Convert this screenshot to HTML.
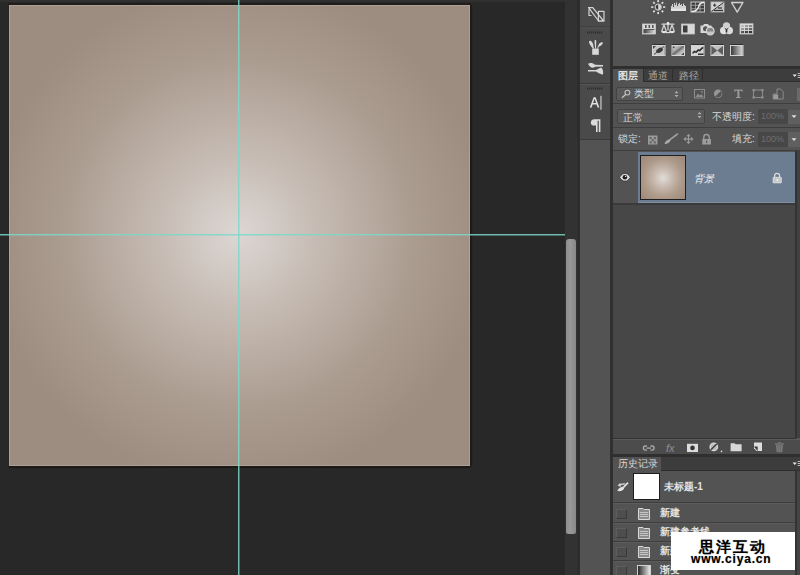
<!DOCTYPE html>
<html><head><meta charset="utf-8">
<style>
*{margin:0;padding:0;box-sizing:border-box}
html,body{width:800px;height:575px;overflow:hidden;background:#282828;font-family:"Liberation Sans",sans-serif;position:relative}
.a{position:absolute}
.t{color:#d8d8d8;font-size:10px;line-height:11px;white-space:nowrap;font-weight:500}
</style></head><body>
<!-- top strip -->
<div class="a" style="left:0;top:0;width:577px;height:2px;background:#303030"></div>
<div class="a" style="left:8px;top:3px;width:463px;height:2px;background:#201d1c"></div>

<!-- canvas -->
<div class="a" style="left:9px;top:5px;width:461px;height:461px;background:radial-gradient(circle at 229px 229px,#dcd7d4 0px,#c6bbb3 80px,#ab9c90 175px,#9d8d80 250px);box-shadow:0 2px 1px #1c1917,2px 0 1px #1e1b19"></div>
<div class="a" style="left:9px;top:5px;width:461px;height:461px;border:1px solid rgba(215,210,205,0.28)"></div>

<!-- guides -->
<div class="a" style="left:0;top:234px;width:565px;height:1px;background:rgba(125,215,200,0.85)"></div><div class="a" style="left:0;top:235px;width:565px;height:1px;background:rgba(125,215,200,0.4)"></div>
<div class="a" style="left:238px;top:0;width:1px;height:575px;background:rgba(125,215,200,0.85)"></div><div class="a" style="left:239px;top:0;width:1px;height:575px;background:rgba(125,215,200,0.4)"></div>

<!-- scrollbar -->
<div class="a" style="left:565px;top:0;width:12px;height:575px;background:#323232"></div>
<div class="a" style="left:566px;top:239px;width:10px;height:295px;border-radius:3px 3px 2px 2px;background:linear-gradient(90deg,#8e8e8e,#999 40%,#888)"></div>
<div class="a" style="left:577px;top:0;width:3px;height:575px;background:#2d2d2d"></div>

<!-- toolbar column -->
<div class="a" style="left:580px;top:0;width:30px;height:575px;background:#535353"></div>
<div class="a" style="left:580px;top:0;width:30px;height:139px;background:#4a4a4a"></div>
<div class="a" style="left:610px;top:0;width:3px;height:575px;background:#303030"></div>

<!-- right panels -->
<div class="a" style="left:613px;top:0;width:187px;height:575px;background:#535353"></div>


<!-- adjustments panel -->
<div class="a" style="left:613px;top:0;width:187px;height:66px;background:#535353"></div>
<div class="a" style="left:613px;top:66px;width:187px;height:3px;background:#2f2f2f"></div>
<!-- layers tab bar -->
<div class="a" style="left:613px;top:69px;width:187px;height:13px;background:#3d3d3d"></div>
<div class="a" style="left:613px;top:69px;width:30px;height:13px;background:#535353"></div>
<div class="a" style="left:643px;top:68px;width:1px;height:14px;background:#2d2d2d"></div>
<div class="a" style="left:672px;top:68px;width:1px;height:14px;background:#2d2d2d"></div>
<div class="a" style="left:702px;top:68px;width:1px;height:14px;background:#2d2d2d"></div>
<div class="a t" style="left:618px;top:70px;font-weight:bold;color:#e0e0e0">图层</div>
<div class="a t" style="left:648px;top:70px;color:#a8a8a8">通道</div>
<div class="a t" style="left:679px;top:70px;color:#a8a8a8">路径</div>

<!-- layers content -->
<div class="a" style="left:613px;top:82px;width:187px;height:357px;background:#535353"></div>
<div class="a" style="left:613px;top:103px;width:187px;height:1px;background:#3e3e3e"></div>
<div class="a" style="left:613px;top:127px;width:187px;height:1px;background:#3e3e3e"></div>
<div class="a" style="left:613px;top:150px;width:187px;height:1px;background:#3e3e3e"></div>
<!-- filter dropdown -->
<div class="a" style="left:616px;top:87px;width:67px;height:14px;background:#5a5a5a;border:1px solid #434343;border-radius:2px"></div>
<div class="a t" style="left:634px;top:88px">类型</div>
<!-- blend dropdown -->
<div class="a" style="left:617px;top:109px;width:88px;height:15px;background:#5a5a5a;border:1px solid #434343;border-radius:2px"></div>
<div class="a t" style="left:623px;top:112px">正常</div>
<div class="a t" style="left:712px;top:111px">不透明度:</div>
<div class="a" style="left:758px;top:109px;width:30px;height:15px;background:#474747"></div>
<div class="a t" style="left:761px;top:111px;color:#6f6f6f;font-size:9px">100%</div>
<div class="a" style="left:788px;top:110px;width:12px;height:14px;background:#5f5f5f"></div>
<!-- lock row -->
<div class="a t" style="left:618px;top:133px">锁定:</div>
<div class="a t" style="left:732px;top:133px">填充:</div>
<div class="a" style="left:758px;top:132px;width:30px;height:15px;background:#474747"></div>
<div class="a t" style="left:761px;top:134px;color:#6f6f6f;font-size:9px">100%</div>
<div class="a" style="left:788px;top:132px;width:12px;height:15px;background:#5f5f5f"></div>

<!-- layer list -->
<div class="a" style="left:613px;top:151px;width:183px;height:287px;background:#474747"></div>
<div class="a" style="left:613px;top:151px;width:183px;height:53px;background:#535353"></div>
<div class="a" style="left:638px;top:152px;width:157px;height:51px;background:#6c7d92"></div>
<div class="a" style="left:638px;top:202px;width:157px;height:1px;background:#7f8aa0"></div><div class="a" style="left:613px;top:203px;width:182px;height:2px;background:#3a3a3a"></div>
<div class="a" style="left:640px;top:155px;width:46px;height:45px;border:1px solid #1e1e1e;background:radial-gradient(circle at 22px 22px,#e2ddd8 0px,#c8bab0 9px,#ad9a8a 19px,#a18c7b 28px)"></div>
<div class="a" style="left:694px;top:173px;color:#f0f0f0;font-size:10px;line-height:11px;font-weight:500;font-style:italic;white-space:nowrap">背景</div>

<!-- layers bottom bar -->
<div class="a" style="left:613px;top:438px;width:183px;height:1px;background:#333"></div>
<div class="a" style="left:613px;top:439px;width:187px;height:15px;background:#4c4c4c"></div>
<div class="a" style="left:613px;top:454px;width:187px;height:3px;background:#2f2f2f"></div>
<!-- history tab bar -->
<div class="a" style="left:613px;top:457px;width:187px;height:14px;background:#3d3d3d"></div>
<div class="a" style="left:613px;top:457px;width:48px;height:14px;background:#535353"></div>
<div class="a t" style="left:618px;top:458px">历史记录</div>
<!-- history content -->
<div class="a" style="left:613px;top:471px;width:183px;height:104px;background:#535353"></div>
<div class="a" style="left:633px;top:473px;width:27px;height:27px;background:#fff;border:1px solid #1e1e1e"></div>
<div class="a t" style="left:664px;top:481px;font-weight:bold;color:#e2e2e2">未标题-1</div>
<div class="a" style="left:613px;top:502px;width:183px;height:1px;background:#3d3d3d"></div>
<div class="a" style="left:613px;top:522px;width:183px;height:1px;background:#3d3d3d"></div>
<div class="a" style="left:613px;top:541px;width:183px;height:1px;background:#3d3d3d"></div>
<div class="a" style="left:613px;top:560px;width:183px;height:1px;background:#3d3d3d"></div>
<div class="a t" style="left:660px;top:507px;font-weight:bold;color:#e2e2e2">新建</div>
<div class="a t" style="left:660px;top:526px;font-weight:bold;color:#e2e2e2">新建参考线</div>
<div class="a t" style="left:660px;top:545px;font-weight:bold;color:#e2e2e2">新建参考线</div>
<div class="a t" style="left:660px;top:564px;font-weight:bold;color:#e2e2e2">渐变</div>
<div class="a" style="left:616px;top:509px;width:11px;height:10px;border:1px solid;border-color:#5e5e5e #3a3a3a #3a3a3a #5e5e5e;background:#4e4e4e"></div>
<div class="a" style="left:616px;top:528px;width:11px;height:10px;border:1px solid;border-color:#5e5e5e #3a3a3a #3a3a3a #5e5e5e;background:#4e4e4e"></div>
<div class="a" style="left:616px;top:547px;width:11px;height:10px;border:1px solid;border-color:#5e5e5e #3a3a3a #3a3a3a #5e5e5e;background:#4e4e4e"></div>
<div class="a" style="left:616px;top:566px;width:11px;height:10px;border:1px solid;border-color:#5e5e5e #3a3a3a #3a3a3a #5e5e5e;background:#4e4e4e"></div>


<svg class="a" style="left:0;top:0" width="800" height="575" viewBox="0 0 800 575">
<defs>
<linearGradient id="gl" x1="0" y1="0" x2="0" y2="1"><stop offset="0" stop-color="#e8e8e8"/><stop offset="1" stop-color="#b8b8b8"/></linearGradient>
<linearGradient id="gh" x1="0" y1="0" x2="1" y2="0"><stop offset="0" stop-color="#3a3a3a"/><stop offset="1" stop-color="#d8d8d8"/></linearGradient>
<linearGradient id="gd" x1="0" y1="0" x2="1" y2="1"><stop offset="0" stop-color="#444"/><stop offset="1" stop-color="#d0d0d0"/></linearGradient>
</defs>
<!-- ===== adjustments row 1 ===== -->
<g stroke="#dedede" stroke-width="1.7"><line x1="663.10" y1="7.10" x2="665.20" y2="7.10"/><line x1="661.66" y1="10.56" x2="663.15" y2="12.05"/><line x1="658.20" y1="12.00" x2="658.20" y2="14.10"/><line x1="654.74" y1="10.56" x2="653.25" y2="12.05"/><line x1="653.30" y1="7.10" x2="651.20" y2="7.10"/><line x1="654.74" y1="3.64" x2="653.25" y2="2.15"/><line x1="658.20" y1="2.20" x2="658.20" y2="0.10"/><line x1="661.66" y1="3.64" x2="663.15" y2="2.15"/></g>
<circle cx="658.2" cy="7.1" r="3.2" fill="#d8d8d8" stroke="#b8b8b8" stroke-width="0.9"/>
<path d="M658.2 4.7 A2.4 2.4 0 0 0 658.2 9.5 Z" fill="#353535"/>
<!-- levels -->
<g fill="#cfcfcf"><rect x="671" y="6" width="1" height="5"/><rect x="672" y="4" width="1" height="7"/><rect x="673" y="7" width="1" height="4"/><rect x="674" y="3" width="1" height="8"/><rect x="675" y="5" width="1" height="6"/><rect x="676" y="2.5" width="1" height="8.5"/><rect x="677" y="6" width="1" height="5"/><rect x="678" y="4" width="1" height="7"/><rect x="679" y="3" width="1" height="8"/><rect x="680" y="5" width="1" height="6"/><rect x="681" y="4" width="1" height="7"/><rect x="682" y="6" width="1" height="5"/><rect x="683" y="3.5" width="1" height="7.5"/><rect x="684" y="5" width="1" height="6"/><rect x="685" y="6" width="1" height="5"/></g>
<rect x="671" y="8.5" width="15" height="2.5" fill="#e4e4e4"/>
<!-- curves -->
<rect x="691" y="2" width="13.5" height="10" fill="#3e3e3e" stroke="#c8c8c8" stroke-width="1"/>
<g stroke="#aaa" stroke-width="0.8"><line x1="695.5" y1="2" x2="695.5" y2="12"/><line x1="700" y1="2" x2="700" y2="12"/><line x1="691" y1="5.3" x2="704.5" y2="5.3"/><line x1="691" y1="8.7" x2="704.5" y2="8.7"/></g>
<path d="M691.5 11.5 C696 11.5 698 9 698.5 7 C699 4.5 700.5 2.5 704 2.5" fill="none" stroke="#eee" stroke-width="1.3"/>
<!-- exposure -->
<rect x="711" y="2" width="13" height="10" fill="#d4d4d4" stroke="#bbb" stroke-width="0.8"/>
<path d="M711.5 11.5 L723.5 2.5 L723.5 11.5 Z" fill="#c0c0c0"/>
<line x1="711.5" y1="11.5" x2="723.5" y2="2.5" stroke="#333" stroke-width="1"/>
<path d="M713 5.2 h3.4 M714.7 3.5 v3.4" stroke="#333" stroke-width="1"/>
<line x1="718" y1="8" x2="722" y2="8" stroke="#333" stroke-width="1.2"/>
<line x1="714" y1="10.5" x2="723" y2="10.5" stroke="#333" stroke-width="1.2"/>
<!-- vibrance triangle -->
<path d="M731.5 2.5 L743 2.5 L737.2 12.2 Z" fill="#5a5a5a" stroke="#d0d0d0" stroke-width="1.3" stroke-linejoin="round"/>
<path d="M734 4 L740.5 4 L737.2 9.5 Z" fill="#4a4a4a"/>

<!-- ===== adjustments row 2 ===== -->
<!-- HSL -->
<rect x="642.5" y="24" width="13" height="10" fill="#d8d8d8" stroke="#c8c8c8" stroke-width="0.8"/>
<rect x="643.5" y="30" width="11" height="3.2" fill="url(#gh)"/>
<g fill="#555"><rect x="645" y="25" width="1.6" height="3"/><rect x="648.5" y="25" width="1.6" height="3"/><rect x="652" y="25" width="1.6" height="3"/></g>
<rect x="643.5" y="29" width="11" height="1" fill="#555"/>
<!-- balance -->
<g fill="none" stroke="#d8d8d8" stroke-width="1.2" stroke-linecap="round">
<line x1="662" y1="24.2" x2="674" y2="24.2"/><line x1="668" y1="23" x2="668" y2="30"/>
<path d="M664 25 L661.8 31 M664 25 L666.2 31 M672 25 L669.8 31 M672 25 L674.2 31"/>
</g>
<circle cx="668" cy="23.3" r="1.3" fill="#eee"/>
<path d="M661.3 31 h5.4 a2.7 2.2 0 0 1 -5.4 0 Z M669.3 31 h5.4 a2.7 2.2 0 0 1 -5.4 0 Z" fill="#e0e0e0"/>
<rect x="666" y="32" width="4" height="1.2" fill="#ddd"/>
<!-- B&W -->
<rect x="681.5" y="24" width="13" height="10" fill="#d8d8d8" stroke="#c0c0c0" stroke-width="0.8"/>
<rect x="683" y="25.5" width="4.5" height="7" fill="#3c3c3c"/>
<!-- photo filter -->
<path d="M700.5 25.5 h2.5 l1 -1.5 h4 l1 1.5 h2.5 v7.5 h-11 Z" fill="#d8d8d8"/>
<circle cx="705.5" cy="28.8" r="2.5" fill="#555"/>
<circle cx="710.2" cy="31" r="3.9" fill="#888" stroke="#e0e0e0" stroke-width="1.1"/>
<path d="M707 31.5 a3.2 3.2 0 0 0 6.4 0 Z" fill="#c8c8c8"/>
<!-- channel mixer -->
<circle cx="726.5" cy="25.8" r="3.6" fill="#d0d0d0"/>
<circle cx="723.8" cy="30.5" r="3.8" fill="#e0e0e0"/>
<circle cx="729.2" cy="30.5" r="3.8" fill="#dadada"/>
<path d="M724 27.2 L726.5 29 L729 27.2 L727.3 29.8 L727.3 32.5 L725.7 32.5 L725.7 29.8 Z" fill="#333"/>
<!-- color lookup -->
<rect x="740" y="23.8" width="13" height="10.2" fill="#e0e0e0" stroke="#c8c8c8" stroke-width="0.8"/>
<g>
<rect x="741" y="25" width="3.2" height="2.2" fill="#bbb"/><rect x="745" y="25" width="3.2" height="2.2" fill="#999"/><rect x="749" y="25" width="3.2" height="2.2" fill="#888"/>
<rect x="741" y="28" width="3.2" height="2.2" fill="#999"/><rect x="745" y="28" width="3.2" height="2.2" fill="#777"/><rect x="749" y="28" width="3.2" height="2.2" fill="#666"/>
<rect x="741" y="31" width="3.2" height="2.2" fill="#555"/><rect x="745" y="31" width="3.2" height="2.2" fill="#444"/><rect x="749" y="31" width="3.2" height="2.2" fill="#333"/>
</g>

<!-- ===== adjustments row 3 ===== -->
<g fill="#2e2e2e"><rect x="652.5" y="44" width="12.5" height="1"/><rect x="672" y="44" width="12.5" height="1"/><rect x="691.5" y="44" width="12.5" height="1"/><rect x="711" y="44" width="12.5" height="1"/><rect x="730.5" y="44" width="12.5" height="1"/></g>
<g fill="none" stroke="#d4d4d4" stroke-width="1">
<rect x="652.5" y="45.5" width="12.5" height="10"/>
<rect x="672" y="45.5" width="12.5" height="10"/>
<rect x="691.5" y="45.5" width="12.5" height="10"/>
<rect x="711" y="45.5" width="12.5" height="10"/>
<rect x="730.5" y="45.5" width="12.5" height="10"/>
</g>
<!-- invert -->
<rect x="653" y="46" width="11.5" height="9" fill="#c4c4c4"/>
<path d="M653 46 h3 l-3 3 Z" fill="#444"/>
<ellipse cx="659.5" cy="50.3" rx="3.6" ry="2.2" transform="rotate(-30 659.5 50.3)" fill="#3a3a3a"/>
<line x1="654" y1="54.5" x2="664" y2="46.5" stroke="#3a3a3a" stroke-width="0.9"/>
<!-- posterize -->
<defs><linearGradient id="gp" x1="0" y1="0" x2="1" y2="1"><stop offset="0" stop-color="#d0d0d0"/><stop offset="0.35" stop-color="#a8a8a8"/><stop offset="0.5" stop-color="#6a6a6a"/><stop offset="0.65" stop-color="#b0b0b0"/><stop offset="1" stop-color="#d8d8d8"/></linearGradient></defs>
<rect x="672.5" y="46" width="11.5" height="9" fill="url(#gp)"/>
<rect x="673" y="46.5" width="1.5" height="1.5" fill="#444"/>
<path d="M684 52.5 L681 55 L684 55 Z" fill="#444"/>
<!-- threshold -->
<rect x="692" y="46" width="11.5" height="9" fill="#d6d6d6"/>
<path d="M692.5 52 L694.5 50.5 L696 51.2 L698 49 L699.5 49.6 L701.5 47.5 L703.2 46.8 L703.2 48.6 L701.8 49.5 L700 51.5 L698.5 51 L696.5 53 L695 52.5 L692.5 54 Z" fill="#2e2e2e"/>
<rect x="698" y="53.5" width="5.5" height="1.5" fill="#333"/>
<!-- selective color -->
<rect x="711.5" y="46" width="11.5" height="9" fill="#c0c0c0"/>
<path d="M711.5 46 L717.2 50.5 L711.5 55 Z M723 46 L717.2 50.5 L723 55 Z" fill="#5e5e5e"/>
<!-- gradient map -->
<rect x="731" y="46" width="11.5" height="9" fill="url(#gh)"/>
</svg>


<svg class="a" style="left:0;top:0" width="800" height="575" viewBox="0 0 800 575">
<!-- ===== toolbar ===== -->
<g fill="none" stroke="#d4d4d4" stroke-width="1.2" stroke-linejoin="round">
 <path d="M588.6 7.6 L592.8 7.6 L603.6 21 L598.6 21 Z"/>
 <path d="M589 9 L589 15.5 L591.5 15.5"/>
 <rect x="598.4" y="11.4" width="5.6" height="9.6"/>
</g>
<rect x="580" y="26.5" width="30" height="1" fill="#3a3a3a"/>
<rect x="580" y="27.5" width="30" height="1" fill="#555"/>
<g fill="#2e2e2e"><rect x="587" y="31.5" width="1.2" height="2"/><rect x="589" y="31.5" width="1.2" height="2"/><rect x="591" y="31.5" width="1.2" height="2"/><rect x="593" y="31.5" width="1.2" height="2"/><rect x="595" y="31.5" width="1.2" height="2"/><rect x="597" y="31.5" width="1.2" height="2"/><rect x="599" y="31.5" width="1.2" height="2"/><rect x="601" y="31.5" width="1.2" height="2"/></g>
<!-- brushes -->
<g fill="#d8d8d8">
 <path d="M592.2 48.5 h6.6 v6.3 h-6.6 Z"/>
 <path d="M589.2 41.2 C590.5 40 592.4 41.6 593 44 L594 48.5 L593 48.5 C591.5 46.5 588.4 43.5 589.2 41.2 Z"/>
 <path d="M595 40 C596.3 39.6 596.5 41 596.2 43 L596 48.5 L595.2 48.5 L594.6 43 C594.5 41.5 594.5 40.2 595 40 Z"/>
 <path d="M597 48.5 L598.5 45 C599.5 43 601 42 603 42.5 C602.5 44.5 601 46 599 46.5 L597.8 48.5 Z"/>
</g>
<!-- tool presets -->
<g fill="#d8d8d8">
 <path d="M588 63.8 C590 62.5 593 62.8 595 64.8 L603 65 L603 66.5 L595 66.8 C593 68.5 590 68 588 63.8 Z"/>
 <path d="M588 70 L596 70 L601 67.5 C603 68.5 603.5 72 603 74.5 C601 74.5 598 73 596 71.6 L588 71.6 Z"/>
</g>
<rect x="580" y="83" width="30" height="1" fill="#3a3a3a"/>
<rect x="580" y="84" width="30" height="1" fill="#555"/>
<g fill="#2e2e2e"><rect x="587" y="87.5" width="1.2" height="2"/><rect x="589" y="87.5" width="1.2" height="2"/><rect x="591" y="87.5" width="1.2" height="2"/><rect x="593" y="87.5" width="1.2" height="2"/><rect x="595" y="87.5" width="1.2" height="2"/><rect x="597" y="87.5" width="1.2" height="2"/><rect x="599" y="87.5" width="1.2" height="2"/><rect x="601" y="87.5" width="1.2" height="2"/></g>
<!-- type -->
<path d="M589.8 107.6 L593.6 97.3 L595.6 97.3 L599.4 107.6 L597.6 107.6 L596.6 104.6 L592.6 104.6 L591.6 107.6 Z M593.1 103.1 L596.1 103.1 L594.6 98.8 Z" fill="#e0e0e0"/>
<rect x="600.4" y="95.8" width="1.1" height="14" fill="#d8d8d8"/>
<!-- paragraph -->
<path d="M594.5 119.2 L600.4 119.2 L600.4 132 L598.8 132 L598.8 120.8 L597.6 120.8 L597.6 132 L596 132 L596 125.6 L594.5 125.6 C591.8 125.6 590.8 124 590.8 122.4 C590.8 120.6 592 119.2 594.5 119.2 Z" fill="#dcdcdc"/>
<rect x="580" y="139" width="30" height="1" fill="#3a3a3a"/>

<!-- ===== layers filter row ===== -->
<circle cx="627.4" cy="92.6" r="2.4" fill="none" stroke="#c4c4c4" stroke-width="1.1"/>
<line x1="625.6" y1="94.5" x2="622" y2="97.8" stroke="#c4c4c4" stroke-width="1.3"/>
<path d="M674.5 93.3 L676.5 91 L678.5 93.3 Z M674.5 95 L678.5 95 L676.5 97.3 Z" fill="#b0b0b0"/>
<g fill="none" stroke="#8c8c8c" stroke-width="1">
 <rect x="694.5" y="89.5" width="10" height="8.5"/>
 <rect x="753.5" y="90" width="9" height="7.5"/>
</g>
<path d="M695.5 97 L698 93.5 L700 95.5 L701.5 94 L703.5 97 Z" fill="#8c8c8c"/>
<circle cx="702" cy="91.8" r="0.9" fill="#8c8c8c"/>
<circle cx="718.1" cy="93.8" r="4.2" fill="#959595"/>
<path d="M715.3 96.6 L720.9 91 A4 4 0 0 1 715.3 96.6 Z" fill="#555"/>
<path d="M734.2 89.6 h8.4 v2.2 h-1 v-1 h-2.2 v6.2 h1.3 v1 h-4.6 v-1 h1.3 v-6.2 h-2.2 v1 h-1 Z" fill="#9a9a9a"/>
<g fill="#8c8c8c"><rect x="752.5" y="89" width="2.4" height="2.4"/><rect x="761.2" y="89" width="2.4" height="2.4"/><rect x="752.5" y="96.2" width="2.4" height="2.4"/><rect x="761.2" y="96.2" width="2.4" height="2.4"/></g>
<path d="M777 89 h3.5 l2.7 2.7 v7.3 h-10 v-5 h3.8 Z" fill="none" stroke="#8c8c8c" stroke-width="1"/>
<rect x="773.4" y="94.5" width="4.8" height="4.5" fill="#9a9a9a"/>
<rect x="797" y="88" width="3" height="13" fill="#6a6a6a"/>
<!-- blend row -->
<path d="M697.5 114.3 L699.5 112 L701.5 114.3 Z M697.5 116 L701.5 116 L699.5 118.3 Z" fill="#b0b0b0"/>
<path d="M791.5 115.3 L796.5 115.3 L794 118 Z" fill="#e0e0e0"/>
<path d="M791.5 138.3 L796.5 138.3 L794 141 Z" fill="#e0e0e0"/>
<!-- lock row icons -->
<rect x="648" y="135.5" width="9.5" height="9" fill="#9a9a9a"/>
<g fill="#6a6a6a"><rect x="649.5" y="137" width="2.2" height="2.2"/><rect x="653.8" y="137" width="2.2" height="2.2"/><rect x="651.7" y="139.2" width="2.2" height="2.2"/><rect x="649.5" y="141.3" width="2.2" height="2.2"/><rect x="653.8" y="141.3" width="2.2" height="2.2"/></g>
<line x1="669.5" y1="140" x2="677.5" y2="134" stroke="#9c9c9c" stroke-width="1.6" stroke-linecap="round"/>
<path d="M664.5 144 C665 141.5 667 139.5 669.5 139.5 L670.6 140.8 C669.5 143 667 144.3 664.5 144 Z" fill="#a8a8a8"/>
<g fill="#9c9c9c">
<path d="M688.5 134 L690.8 136.3 L686.2 136.3 Z M688.5 144 L690.8 141.7 L686.2 141.7 Z M683.5 139 L685.8 136.7 L685.8 141.3 Z M693.5 139 L691.2 136.7 L691.2 141.3 Z"/>
<rect x="684.5" y="138.4" width="8" height="1.2"/><rect x="687.9" y="135" width="1.2" height="8"/>
</g>
<path d="M703.8 139 v-1.8 a2.7 2.7 0 0 1 5.4 0 v1.8" fill="none" stroke="#9c9c9c" stroke-width="1.4"/>
<rect x="702.3" y="139" width="8.6" height="5.5" fill="#9c9c9c"/>
<rect x="706.1" y="140.5" width="1.1" height="2.4" fill="#555"/>

<!-- ===== layer row ===== -->
<path d="M619.6 177.3 C621.5 174.3 623.3 173.5 625 173.5 C626.7 173.5 628.5 174.3 630.3 177.3 C628.5 180.3 626.7 181.1 625 181.1 C623.3 181.1 621.5 180.3 619.6 177.3 Z" fill="#dedede" stroke="#222" stroke-width="0.6"/>
<circle cx="624.9" cy="177.3" r="2.3" fill="#1e1e1e"/>
<circle cx="625.6" cy="176.4" r="0.7" fill="#ddd"/>
<path d="M774.6 177.3 v-1.5 a2.5 2.5 0 0 1 5 0 v1.5" fill="none" stroke="#dcdcdc" stroke-width="1.2"/>
<rect x="773" y="177.3" width="8.4" height="5.6" rx="0.6" fill="#c8c8c8" stroke="#eee" stroke-width="0.6"/>
<rect x="776.7" y="179" width="1" height="2" fill="#fff"/>

<!-- ===== layers bottom bar ===== -->
<g fill="none" stroke="#a8a8a8" stroke-width="1.3">
 <path d="M647 446 h-1.5 a2.1 2.1 0 0 0 0 4.2 h1.5"/>
 <path d="M650.5 446 h1.5 a2.1 2.1 0 0 1 0 4.2 h-1.5"/>
 <line x1="646.5" y1="448.1" x2="651" y2="448.1"/>
</g>
<text x="666" y="452.3" font-family="Liberation Sans" font-style="italic" font-size="11" fill="#8e8e8e">fx</text>
<rect x="687" y="443.8" width="11" height="8.2" fill="#dcdcdc"/>
<circle cx="692.5" cy="447.9" r="2.3" fill="#333"/>
<circle cx="713.8" cy="446.9" r="4.4" fill="#d8d8d8"/>
<circle cx="713.8" cy="446.9" r="3.2" fill="#bdbdbd"/>
<path d="M710.9 449.8 L716.7 444" stroke="#3a3a3a" stroke-width="1.5"/>
<path d="M713.8 442.7 A4.2 4.2 0 0 1 713.8 451.1 Z" fill="#d8d8d8" opacity="0"/>
<circle cx="721.5" cy="451.4" r="0.8" fill="#ddd"/>
<path d="M730.6 443.2 h4 l1 1 h6 v7 h-11 Z" fill="#d8d8d8"/>
<path d="M754 442.5 h8 v8.6 h-5.5 l-2.5 -2.8 Z" fill="#dcdcdc"/>
<path d="M754 446.5 h3.6 v4.6 Z" fill="#333"/>
<g fill="#7a7a7a"><rect x="775" y="443.3" width="9" height="1.4"/><rect x="777.8" y="442.3" width="3.4" height="1"/><path d="M776 445.3 h7 l-0.6 7 h-5.8 Z"/></g>
<g stroke="#5a5a5a" stroke-width="0.6"><line x1="778.3" y1="446" x2="778.3" y2="451.5"/><line x1="780.7" y1="446" x2="780.7" y2="451.5"/></g>
<path d="M792.6 74.6 L796.8 74.6 L794.7 77 Z" fill="#e8e8e8"/><g fill="#b8b8b8"><rect x="797.6" y="73" width="2.4" height="1"/><rect x="797.6" y="75" width="2.4" height="1"/><rect x="797.6" y="77" width="2.4" height="1"/></g>
<path d="M792.6 462.6 L796.8 462.6 L794.7 465 Z" fill="#e8e8e8"/><g fill="#b8b8b8"><rect x="797.6" y="461" width="2.4" height="1"/><rect x="797.6" y="463" width="2.4" height="1"/><rect x="797.6" y="465" width="2.4" height="1"/></g>

<!-- ===== history ===== -->
<g>
<line x1="623.2" y1="487.6" x2="628" y2="482.6" stroke="#e0e0e0" stroke-width="1.7"/>
<path d="M617.3 491 C618.3 488.6 620.3 487 622.8 486.8 L624.2 488.2 C623.2 490.4 620.6 491.6 617.3 491 Z" fill="#e4e4e4"/>
<path d="M617.6 485.6 L620.3 482.8 L620.5 484 C622 483.2 623.8 483 625.3 483.5 L624.2 484.9 C622.9 484.6 621.8 484.9 620.7 485.6 L620.8 486.9 Z" fill="#d0d0d0"/>
</g>
<path d="M638.5 508.5 h4.5 l1 1 h5.5 v10 h-11 Z" fill="#8c8c8c" stroke="#d8d8d8" stroke-width="1"/><g fill="#c4c4c4"><rect x="640" y="512" width="8" height="1"/><rect x="640" y="514" width="8" height="1"/><rect x="640" y="516" width="8" height="1"/></g>
<path d="M638.5 527.5 h4.5 l1 1 h5.5 v10 h-11 Z" fill="#8c8c8c" stroke="#d8d8d8" stroke-width="1"/><g fill="#c4c4c4"><rect x="640" y="531" width="8" height="1"/><rect x="640" y="533" width="8" height="1"/><rect x="640" y="535" width="8" height="1"/></g>
<path d="M638.5 546.5 h4.5 l1 1 h5.5 v10 h-11 Z" fill="#8c8c8c" stroke="#d8d8d8" stroke-width="1"/><g fill="#c4c4c4"><rect x="640" y="550" width="8" height="1"/><rect x="640" y="552" width="8" height="1"/><rect x="640" y="554" width="8" height="1"/></g>
<defs><linearGradient id="gh2" x1="0" y1="0" x2="1" y2="0"><stop offset="0" stop-color="#222"/><stop offset="1" stop-color="#f0f0f0"/></linearGradient></defs>
<rect x="637.5" y="565.5" width="13" height="10" fill="url(#gh2)" stroke="#d0d0d0" stroke-width="1"/>
</svg>

<div class="a" style="left:613px;top:503px;width:182px;height:1px;background:#5c5c5c"></div>
<div class="a" style="left:613px;top:523px;width:182px;height:1px;background:#5c5c5c"></div>
<div class="a" style="left:613px;top:542px;width:182px;height:1px;background:#5c5c5c"></div>
<div class="a" style="left:613px;top:561px;width:182px;height:1px;background:#5c5c5c"></div>
<div class="a" style="left:643px;top:81px;width:157px;height:1px;background:#2e2e2e"></div>
<div class="a" style="left:661px;top:470px;width:139px;height:1px;background:#2e2e2e"></div>
<div class="a" style="left:613px;top:439px;width:187px;height:1px;background:#5a5a5a"></div>
<!-- right edge -->
<div class="a" style="left:795px;top:151px;width:2px;height:287px;background:#333"></div>
<div class="a" style="left:797px;top:151px;width:3px;height:287px;background:#414141"></div>
<div class="a" style="left:795px;top:471px;width:2px;height:104px;background:#333"></div>
<div class="a" style="left:797px;top:471px;width:3px;height:104px;background:#444"></div>

<!-- watermark -->
<div class="a" style="left:671px;top:532px;width:124px;height:38px;background:#fff"></div>
<div class="a" style="left:699px;top:538px;font-size:15px;font-weight:bold;color:#000;letter-spacing:2px;white-space:nowrap;line-height:17px;text-shadow:0 0 1px #999">思洋互动</div>
<div class="a" style="left:691px;top:553px;font-size:12px;font-weight:bold;color:#000;white-space:nowrap;line-height:12px;letter-spacing:0.8px;text-shadow:0 0 1px #999">www.ciya.cn</div>

</body></html>
